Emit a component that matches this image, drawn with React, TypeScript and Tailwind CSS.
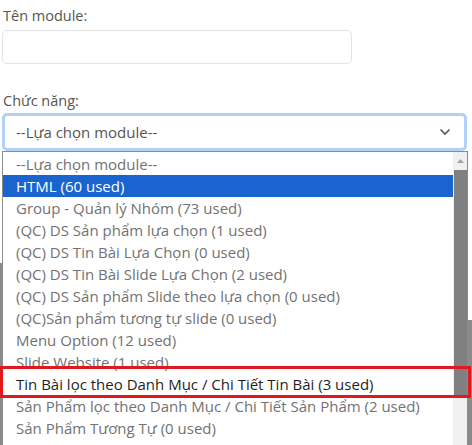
import React from "react";

const options = [
  "--Lựa chọn module--",
  "HTML (60 used)",
  "Group - Quản lý Nhóm (73 used)",
  "(QC) DS Sản phẩm lựa chọn (1 used)",
  "(QC) DS Tin Bài Lựa Chọn (0 used)",
  "(QC) DS Tin Bài Slide Lựa Chọn (2 used)",
  "(QC) DS Sản phẩm Slide theo lựa chọn (0 used)",
  "(QC)Sản phẩm tương tự slide (0 used)",
  "Menu Option (12 used)",
  "Slide Website (1 used)",
  "Tin Bài lọc theo Danh Mục / Chi Tiết Tin Bài (3 used)",
  "Sản Phẩm lọc theo Danh Mục / Chi Tiết Sản Phẩm (2 used)",
  "Sản Phẩm Tương Tự (0 used)",
  "Tin Bài Tương Tự (0 used)",
];

export default function App() {
  return (
    <div
      className="relative h-[445px] w-[472px] overflow-hidden bg-white"
      style={{ fontFamily: '"Open Sans", "Noto Sans", sans-serif' }}
    >
      <div className="flex flex-col px-[2px] pt-[6px]">
        <label className="pl-[1px] text-[14.5px] leading-[20px] text-[#555]">Tên module:</label>
        <div className="mt-[4px] h-[34px] w-[350px] rounded-[5px] border border-[#e3e3e3] bg-white" />
        <label className="mt-[27px] pl-[1px] text-[14.5px] leading-[20px] text-[#555]">Chức năng:</label>
        <div className="mt-[2px] flex h-[38px] w-[465px] items-center justify-between rounded-[5px] border-[3px] border-[#b3d0f7] bg-white pl-[11px] pr-[13px]">
          <span className="text-[15px] text-[#555]">--Lựa chọn module--</span>
          <svg width="12" height="8" viewBox="0 0 12 8" fill="none">
            <path d="M1.5 1.5 L6 6 L10.5 1.5" stroke="#555" strokeWidth="1.6" />
          </svg>
        </div>
      </div>

      {/* backdrop bits peeking around the open list */}
      <div className="absolute left-0 top-[263px] h-[182px] w-[2px] bg-[#8a8a8a]" />
      <div className="absolute right-0 top-[320px] h-[125px] w-[4px] bg-[#8a8a8a]" />

      {/* native listbox */}
      <div className="absolute left-[2px] top-[151px] flex h-[300px] w-[466px] border border-[#8c8c8c] bg-white">
        <ul className="flex-1 pt-[1px]">
          {options.map((o, i) => (
            <li
              key={o}
              className={
                "flex h-[22px] items-center whitespace-nowrap pl-[13px] text-[15px] " +
                (i === 1
                  ? "bg-[#1a64d0] text-white"
                  : i === 10
                  ? "text-[#1f1f1f]"
                  : "text-[#727272]")
              }
            >
              {o}
            </li>
          ))}
        </ul>
        <div className="flex w-[14px] flex-col bg-[#f0f0f0]">
          <div className="flex h-[18px] items-center justify-center">
            <svg width="7" height="4" viewBox="0 0 7 4">
              <path d="M0 4 L3.5 0 L7 4 Z" fill="#a3a3a3" />
            </svg>
          </div>
          <div className="mx-auto h-[228px] w-[13px] bg-[#808080]" />
        </div>
      </div>

      {/* highlight box */}
      <div className="absolute left-0 top-[366px] h-[32px] w-[471px] border-[3px] border-[#e0191e]" />
    </div>
  );
}
